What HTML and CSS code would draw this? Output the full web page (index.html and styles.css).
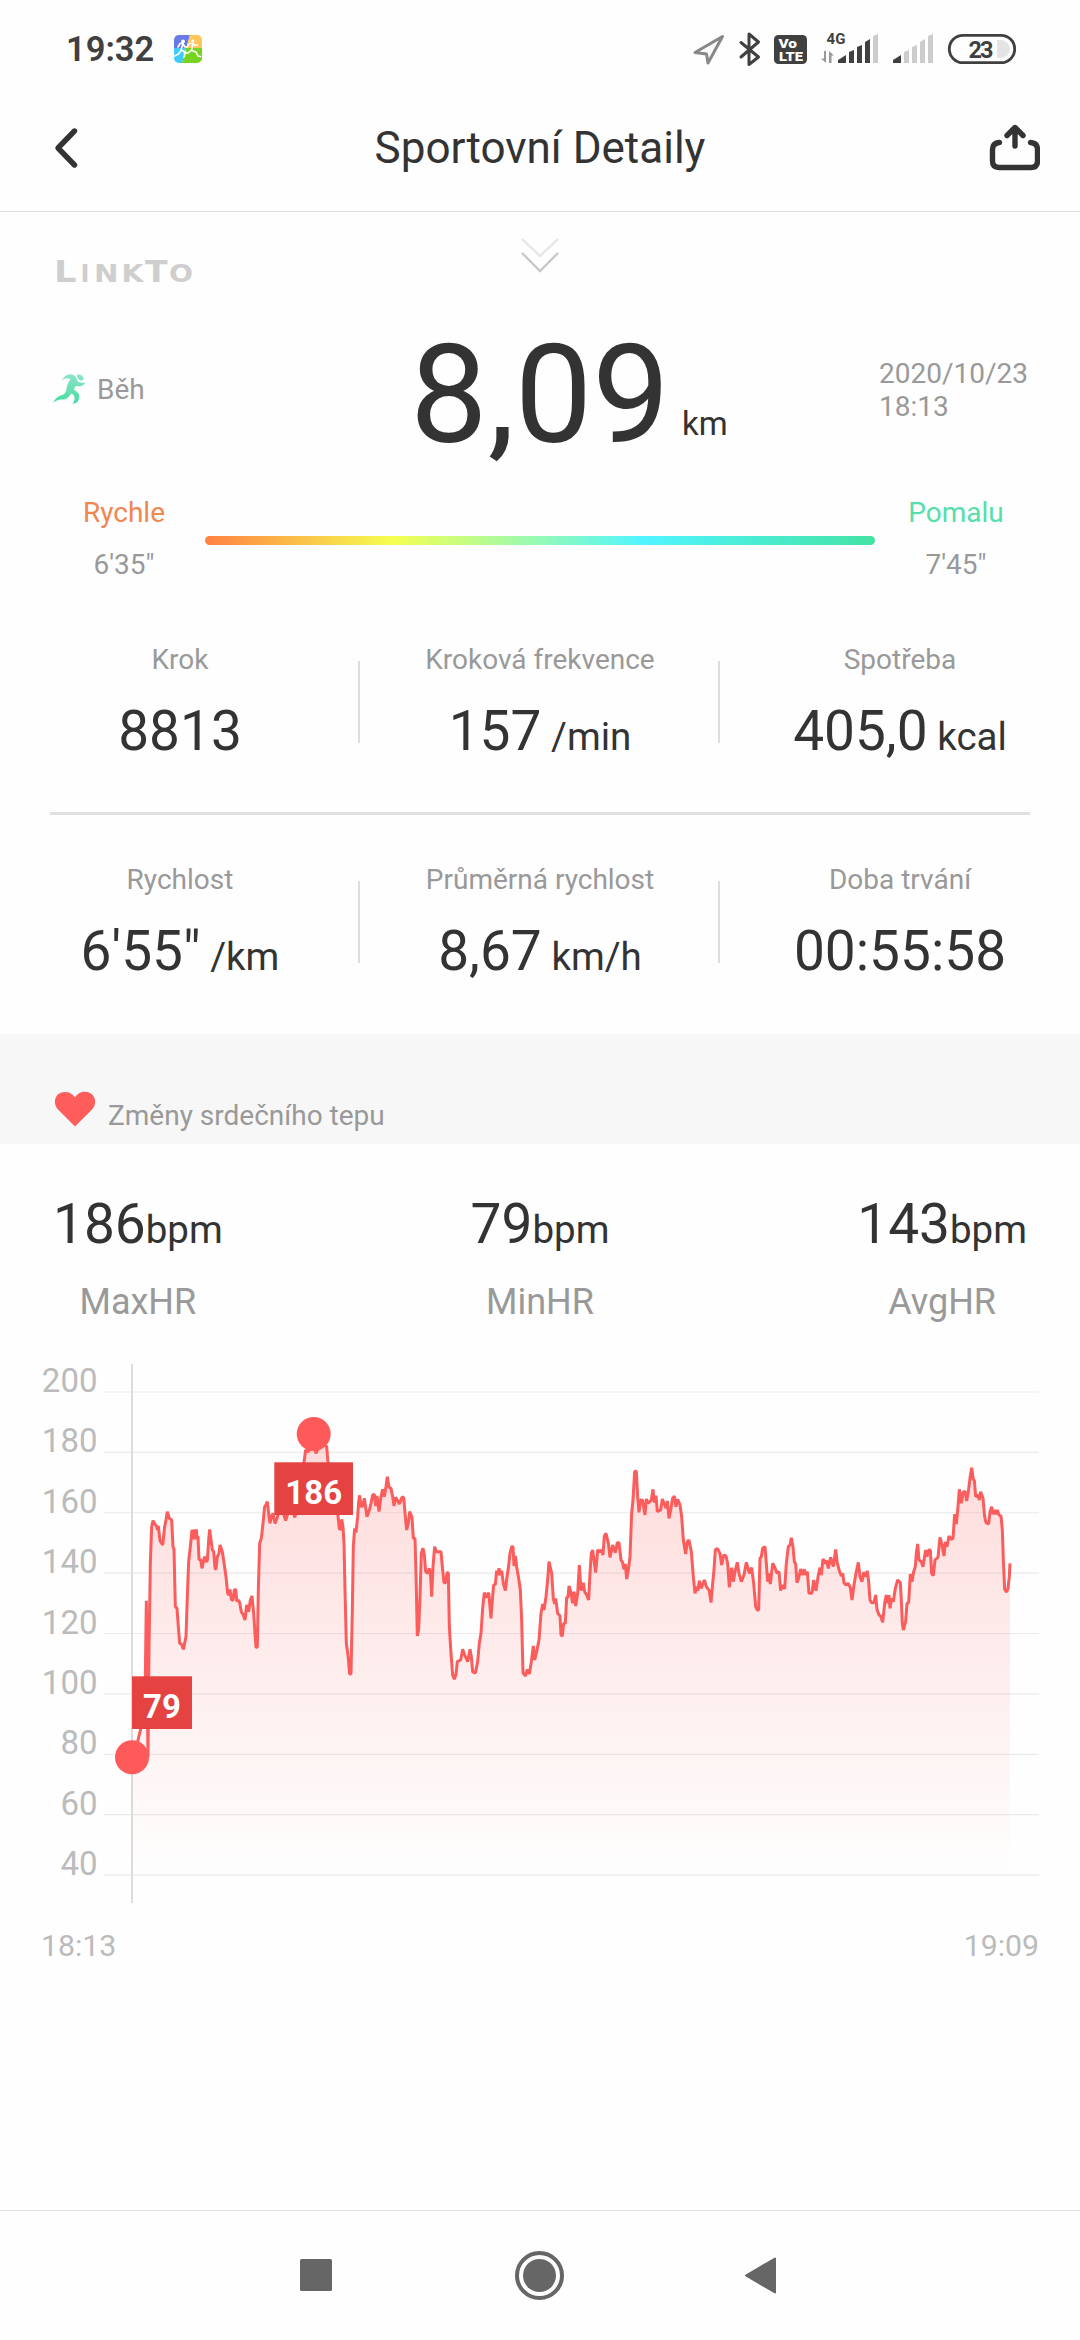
FILE: index.html
```html
<!DOCTYPE html>
<html lang="cs">
<head>
    <meta charset="UTF-8">
    <meta name="viewport" content="width=device-width, initial-scale=1.0">
    <title>Sportovní Detaily</title>
    <link rel="stylesheet" href="styles.css">
</head>
<body>
    <div class="status-bar">
        <span class="clock">19:32</span>
        <svg class="app-icon" width="28" height="28" viewBox="0 0 28 28">
            <defs><clipPath id="app-clip"><rect width="28" height="28" rx="5"/></clipPath></defs>
            <g clip-path="url(#app-clip)">
                <path fill="#667be8" d="M0 0h16l-4 14H0z"/>
                <path fill="#ffc65c" d="M16 0h12v14H12z"/>
                <path fill="#3fcbff" d="M0 13h12L8 28H0z"/>
                <path fill="#76d321" d="M12 13h16v15H8z"/>
            </g>
            <g fill="none" stroke="#fff" stroke-width="1.6" stroke-linecap="round" stroke-linejoin="round">
                <path d="M4 12l2-3.500h3l-2 6.500 4.500 2-1.500 5M7 15.500l-2.500 3.500-4 2M9 9l2 3h2"/>
                <path d="M13.500 11l2-2.500h3.500l-1.500 7 4.500 1.500 2 4 2.500.5M17 15.500l-3 2.500-4 0M19 8.500l2 2 2.500-.5"/>
            </g>
            <circle cx="9" cy="6.500" r="1.900" fill="#fff"/>
            <circle cx="18.800" cy="6" r="1.600" fill="#fff"/>
        </svg>
        <svg class="status-icons" width="328" height="44" viewBox="690 27 328 44">
            <path d="M722.500 36.500L695 52.500l11.500 1.500 1.500 9z" fill="none" stroke="#888" stroke-width="3" stroke-linejoin="round"/>
            <path d="M741 42.500l17.500 14.500-9.500 7.500V34l9.500 8L741 57" fill="none" stroke="#404040" stroke-width="3" stroke-linejoin="round" stroke-linecap="round"/>
            <rect x="774" y="35" width="33" height="29" rx="4.500" fill="#404040"/>
            <text class="volte" x="778.500" y="47.500" textLength="18.500" lengthAdjust="spacingAndGlyphs">Vo</text>
            <text class="volte" x="779" y="60.800" textLength="24" lengthAdjust="spacingAndGlyphs">LTE</text>
            <text class="net" x="826.500" y="44" textLength="19">4G</text>
            <path d="M826 51v12l-5-4.500h3V51zM829 63V51l5 4.500h-2.500V63z" fill="#999"/>
            <path d="M838 63v-3l8-5v8zM849 63V52l5-2v13zM857 63V47l5-2v18zM865 63V42l5-3v24z" fill="#404040"/>
            <path d="M873 63V36l5-2v29z" fill="#ccc"/>
            <path d="M893 63v-3l8-5v8z" fill="#404040"/>
            <path d="M904 63V52l5-2v13zM912 63V47l5-2v18zM920 63V42l5-3v24zM928 63V36l5-2v29z" fill="#ccc"/>
            <rect x="949.300" y="35.300" width="65.400" height="27.400" rx="13.700" fill="none" stroke="#404040" stroke-width="2.800"/>
            <path d="M997 40h4a9 9 0 0 1 0 18h-4z" fill="#e4e4e4"/>
            <text class="battery" x="968.500" y="57.500" textLength="25">23</text>
        </svg>
    </div>

    <header class="header">
        <svg width="26" height="42" viewBox="0 0 26 42">
            <path d="M21.500 4L5 21l16.500 17" fill="none" stroke="#333" stroke-width="5.400" stroke-linecap="round" stroke-linejoin="round"/>
        </svg>
        <h1>Sportovní Detaily</h1>
        <svg width="52" height="50" viewBox="987 120 52 50">
            <g fill="none" stroke="#333" stroke-width="5.400" stroke-linecap="round" stroke-linejoin="round">
                <path d="M998.500 139.500q-7 .5-7 7v11.500q0 6.500 6.500 6.500h32q6.500 0 6.500-6.500v-11.500q0-6.500-7-7"/>
                <path d="M1014 143v-18M1006 132.500l8-8 8 8"/>
            </g>
        </svg>
    </header>

    <section class="summary">
        <div class="brand-row">
            <svg width="140" height="44" viewBox="54 250 140 44">
                <g class="brand">
                    <text class="brand-big" x="54" y="281.500" textLength="22.500" lengthAdjust="spacingAndGlyphs">L</text>
                    <text x="80.500" y="281.500">I</text>
                    <text x="94" y="281.500" textLength="24.500" lengthAdjust="spacingAndGlyphs">N</text>
                    <text x="121.500" y="281.500" textLength="22" lengthAdjust="spacingAndGlyphs">K</text>
                    <text class="brand-big" x="145" y="281.500" textLength="22.500" lengthAdjust="spacingAndGlyphs">T</text>
                    <text x="169" y="281.500" textLength="24" lengthAdjust="spacingAndGlyphs">O</text>
                </g>
            </svg>
            <svg width="38" height="38" viewBox="0 0 38 38">
                <path d="M1 2l18 17L37 2" fill="none" stroke="#e6e6e6" stroke-width="2.400"/>
                <path d="M1 16l18 18 18-18" fill="none" stroke="#c8c8c8" stroke-width="2.400"/>
            </svg>
        </div>

        <div class="distance-row">
            <div class="sport">
                <svg width="34" height="32" viewBox="0 0 34 32">
                    <defs>
                        <linearGradient id="run" x1="0" y1="0" x2="0" y2="1">
                            <stop offset="0" stop-color="#8ee5c8"/>
                            <stop offset="1" stop-color="#45dca0"/>
                        </linearGradient>
                    </defs>
                    <path fill="url(#run)" d="M8.500 7.500C11 3 15 .5 19 1.500c3 .8 5 3 5 6 1 2 5 2.500 8.500 2-2 3.500-6 4.500-9.500 3.500-1.500 1.500-2 3-2 4 4 2 6 4 5 8.500-.5 3-2.500 5-6.500 5 3-3 2.500-7 .5-9l-2-1c-2 3.500-4.500 6-8 6-3.500 0-6 .5-10 3 2.500-4.500 6-7 9-7.500 3-.5 4-3.500 4.500-6 .5-4 2-7.500 4-10-3.500-1.500-6-.5-9 1.500zM24 1.500c4-.5 6.500 1.500 6.500 4.500-.5 2-2.500 1.500-4.500.5C24.500 5.500 24 4 24 1.500z"/>
                </svg>
                <span>Běh</span>
            </div>
            <div class="distance"><span class="distance-value">8,09</span><span class="distance-unit">km</span></div>
            <div class="date">2020/10/23<br>18:13</div>
        </div>

        <div class="pace-row">
            <div class="pace"><span class="fast">Rychle</span><span>6'35"</span></div>
            <div class="pace-bar"></div>
            <div class="pace"><span class="slow">Pomalu</span><span>7'45"</span></div>
        </div>

        <div class="stats">
            <div class="stat"><div class="label">Krok</div><div class="value">8813</div></div>
            <div class="stat"><div class="label">Kroková frekvence</div><div class="value">157 <small>/min</small></div></div>
            <div class="stat"><div class="label">Spotřeba</div><div class="value">405,0 <small>kcal</small></div></div>
        </div>
        <hr>
        <div class="stats">
            <div class="stat"><div class="label">Rychlost</div><div class="value">6'55" <small>/km</small></div></div>
            <div class="stat"><div class="label">Průměrná rychlost</div><div class="value">8,67 <small>km/h</small></div></div>
            <div class="stat"><div class="label">Doba trvání</div><div class="value">00:55:58</div></div>
        </div>
    </section>

    <div class="section-title">
        <svg width="42" height="36" viewBox="0 0 42 36">
            <path fill="#ff5c5c" d="M21 35.500L4 18.500C-.5 13.500 0 6.500 4.500 3 9.500-.5 17 .5 21 6.500 25-.5 33-.5 37.500 3c4.500 3.500 5 10.500.5 15.500z"/>
        </svg>
        <span>Změny srdečního tepu</span>
    </div>

    <section class="heart-rate">
        <div class="hr-item"><div class="value">186<small>bpm</small></div><div class="hr-label">MaxHR</div></div>
        <div class="hr-item"><div class="value">79<small>bpm</small></div><div class="hr-label">MinHR</div></div>
        <div class="hr-item"><div class="value">143<small>bpm</small></div><div class="hr-label">AvgHR</div></div>
    </section>

    <svg class="chart" id="chart" width="1080" height="620" viewBox="0 0 1080 620">
        <defs>
            <linearGradient id="area" gradientUnits="userSpaceOnUse" x1="0" y1="250" x2="0" y2="1575">
                <stop offset="0" stop-color="#ff5a5a" stop-opacity=".22"/>
                <stop offset="1" stop-color="#ff5a5a" stop-opacity="0"/>
            </linearGradient>
        </defs>
        <g id="grid"></g>
        <path class="axis" d="M132 14v539"/>
        <g transform="translate(30) scale(.33333)">
            <path id="hr-area" fill="url(#area)"/>
            <path id="hr-line" class="hr-line"/>
        </g>
        <circle class="dot" cx="132" cy="407.300" r="17"/>
        <circle class="dot" cx="313.700" cy="84" r="17"/>
        <rect class="tag" x="132" y="326.300" width="60" height="52.700"/>
        <text class="tag-text" x="162" y="368">79</text>
        <rect class="tag" x="274.300" y="112.300" width="78.700" height="52.700"/>
        <text class="tag-text" x="313.700" y="153.700">186</text>
        <text class="time" x="41" y="605.500">18:13</text>
        <text class="time time-end" x="1039" y="605.500">19:09</text>
    </svg>

    <nav class="nav-bar">
        <svg width="1080" height="129" viewBox="0 2211 1080 129" fill="#666">
            <rect x="300" y="2259" width="32" height="32" rx="1.500"/>
            <circle cx="539.500" cy="2275.500" r="22.500" fill="none" stroke="#666" stroke-width="4"/>
            <circle cx="539.500" cy="2275.500" r="16.500"/>
            <path d="M746 2275.500l29-17v34z" stroke="#666" stroke-width="2" stroke-linejoin="round"/>
        </svg>
    </nav>

    <script>
        // Body křivky tepu (x, y) ve třetinách pixelu
        const points = `
            305,1220 323,1175 332,1137 346,980 349,752 351,980 354,1220 357,900 361,640 365,530 369,512 374,522 380,528 382,540
            385,528 390,572 398,585 404,530 408,510 412,485 418,505 425,510 429,590 432,598 436,770 441,775 445,830 449,880 454,882
            460,898 468,860 472,740 476,635 481,590 486,540 489,568 492,538 496,568 499,538 501,560 504,560 507,628 512,630 516,655
            521,630 524,620 527,635 532,632 536,570 539,538 543,570 547,600 551,605 555,655 558,658 562,620 567,610 570,585 577,605
            583,645 588,680 593,730 597,735 600,718 604,748 609,752 613,720 617,718 621,755 625,750 629,758 634,785 640,795 645,810
            650,765 656,785 661,750 666,738 671,790 675,850 678,892 682,892 685,720 689,580 694,565 699,520 704,470 708,465 712,455
            717,500 720,520 724,500 729,490 735,520 741,505 750,470 760,490 767,512 775,485 785,480 795,502 805,430 815,380 822,337
            827,300 835,305 845,290 853,295 858,310 864,297 880,280 890,290 894,337 910,420 922,480 928,535 931,540 935,508 939,530
            942,580 945,720 949,880 954,915 959,972 963,972 967,780 970,590 974,535 978,548 983,500 986,455 989,436 993,470 998,468
            1003,445 1006,465 1011,500 1018,480 1023,460 1028,435 1033,433 1037,468 1041,438 1047,485 1053,440 1058,418 1063,440
            1068,410 1072,380 1077,412 1083,415 1088,440 1092,468 1097,442 1108,462 1116,442 1121,442 1126,500 1130,540 1135,520
            1139,485 1146,502 1150,565 1155,565 1158,670 1162,858 1166,840 1170,740 1174,610 1179,595 1183,615 1187,665 1193,670
            1198,655 1202,680 1205,740 1209,650 1214,590 1219,605 1233,605 1237,650 1242,698 1247,698 1251,668 1255,668 1258,830
            1263,910 1268,975 1273,988 1278,972 1282,935 1292,930 1298,898 1304,915 1313,935 1320,898 1324,920 1328,965 1336,970
            1343,935 1348,880 1353,850 1358,775 1363,728 1369,743 1376,728 1380,770 1383,805 1387,750 1391,705 1396,703 1400,662
            1404,675 1407,655 1411,675 1415,662 1420,700 1426,722 1431,680 1435,655 1440,610 1445,590 1449,590 1452,648 1456,618
            1460,650 1466,685 1471,720 1475,810 1479,968 1486,978 1492,958 1498,972 1504,935 1510,888 1514,930 1520,905 1527,870
            1533,790 1538,762 1542,780 1548,740 1553,690 1557,635 1565,670 1570,745 1574,762 1577,745 1583,790 1590,798 1593,855
            1597,858 1601,820 1606,820 1610,742 1614,742 1617,708 1623,728 1628,760 1632,725 1637,768 1643,730 1648,645 1653,722
            1660,698 1664,725 1670,735 1676,750 1680,670 1684,610 1688,600 1692,630 1697,668 1703,600 1710,605 1715,600 1719,615
            1723,558 1728,550 1735,580 1740,622 1748,585 1756,608 1762,578 1767,578 1773,630 1778,638 1782,658 1786,642 1790,687
            1795,660 1800,620 1805,490 1809,450 1814,365 1819,363 1823,440 1827,487 1832,450 1837,450 1841,470 1845,495 1849,447
            1854,460 1864,450 1869,418 1873,458 1878,437 1882,485 1892,480 1897,447 1903,462 1908,475 1912,453 1917,505 1923,475
            1928,445 1933,438 1938,470 1943,448 1950,465 1955,500 1960,570 1967,612 1972,575 1977,570 1984,605 1990,680 1995,730
            2000,710 2004,722 2008,692 2014,715 2023,690 2029,710 2038,722 2043,758 2048,700 2052,660 2056,600 2062,595 2070,610
            2075,645 2081,615 2088,618 2093,640 2098,712 2105,653 2110,695 2116,660 2122,637 2127,670 2134,695 2142,675 2149,637
            2158,670 2165,653 2171,700 2177,770 2182,780 2186,780 2190,625 2194,620 2198,595 2205,590 2209,640 2213,695 2217,670
            2221,702 2228,640 2235,653 2241,670 2247,665 2252,722 2257,705 2264,717 2269,640 2275,590 2280,585 2284,563 2289,590
            2293,635 2297,642 2301,698 2307,680 2312,657 2317,675 2323,658 2327,675 2332,665 2337,730 2346,730 2351,690 2358,722
            2365,675 2370,653 2374,675 2379,627 2385,640 2390,632 2395,655 2402,622 2410,650 2417,598 2422,640 2428,662 2434,678
            2438,670 2442,698 2448,705 2454,700 2461,712 2466,750 2472,705 2478,670 2485,637 2490,680 2496,695 2501,667 2507,680
            2512,663 2516,695 2520,750 2525,758 2532,758 2537,735 2541,778 2547,795 2552,798 2558,817 2564,760 2569,735 2573,760
            2577,735 2580,775 2585,745 2590,755 2596,715 2603,690 2611,698 2614,750 2617,820 2620,840 2627,815 2631,760 2636,758
            2641,672 2646,695 2651,665 2656,650 2659,610 2663,582 2667,630 2674,635 2679,650 2687,600 2691,620 2696,600 2701,600
            2705,670 2710,677 2715,630 2724,622 2730,562 2736,585 2742,618 2746,575 2751,590 2757,558 2763,568 2769,565 2774,492
            2779,522 2784,470 2788,418 2794,460 2800,425 2806,425 2810,453 2815,425 2820,385 2825,353 2830,390 2833,390 2837,440
            2844,435 2848,450 2852,425 2859,445 2864,500 2868,518 2876,522 2880,485 2885,470 2889,493 2893,480 2898,493 2902,480
            2907,495 2913,498 2917,540 2920,630 2924,718 2930,726 2934,715 2938,680 2940,640`.trim().split(/\s+/);

        document.getElementById('hr-line').setAttribute('d', 'M' + points.join('L'));
        document.getElementById('hr-area').setAttribute('d', 'M306,1575L' + points.join('L') + 'V1575Z');

        // Vodorovné čáry a popisky osy
        let grid = '';
        for (let v = 200; v >= 40; v -= 20) {
            const y = 42 + (200 - v) * 3.019;
            grid += `<path class="grid-line" d="M104 ${y}H1039"/>
                <text class="axis-label" x="97.500" y="${y}">${v}</text>`;
        }
        document.getElementById('grid').innerHTML = grid;
    </script>
</body>
</html>
```

FILE: styles.css
```css
* {
    box-sizing: border-box;
}
body {
    margin: 0;
    width: 1080px;
    height: 2340px;
    display: flex;
    flex-direction: column;
    font-family: Roboto, "Noto Sans", sans-serif;
    font-size: 28px;
    color: #333;
    background-color: #fefefe;
}
svg {
    display: block;
    flex-shrink: 0;
}

/* Stavový řádek */
.status-bar {
    height: 85px;
    padding: 13px 62px 0 66px;
    display: flex;
    align-items: center;
}
.clock {
    font-size: 34.5px;
    font-weight: 600;
    color: #404040;
    width: 108px;
}
.status-icons {
    margin-left: auto;
}
.volte {
    font-size: 13px;
    font-weight: 900;
    fill: #fff;
}
.net {
    font-size: 15px;
    font-weight: 700;
    fill: #404040;
}
.battery {
    font-size: 23.5px;
    font-weight: 700;
    fill: #404040;
}

/* Hlavička */
.header {
    height: 127px;
    padding: 0 40px 0 53px;
    display: grid;
    grid-template-columns: 52px 1fr 52px;
    align-items: center;
    border-bottom: 1px solid #e0e0e0;
}
.header h1 {
    margin: 0;
    padding-right: 13px;
    font-size: 44px;
    font-weight: 400;
    text-align: center;
}

/* Souhrn */
.summary {
    height: 822px;
}
.brand-row {
    height: 100px;
    padding: 25px 54px 0;
    display: grid;
    grid-template-columns: 1fr auto 1fr;
}
.brand-row svg:first-child {
    margin-top: 13px;
}
.brand {
    font-family: "DejaVu Sans", sans-serif;
    font-size: 24px;
    font-weight: 700;
    fill: #cecece;
}
.brand-big {
    font-size: 29.5px;
}
.distance-row {
    height: 160px;
    padding: 0 53px;
    display: grid;
    grid-template-columns: 1fr auto 1fr;
    color: #999;
}
.sport {
    display: flex;
    align-items: flex-start;
    gap: 10px;
    line-height: 32px;
    padding-top: 61px;
}
.sport span {
    padding-top: 1px;
}
.distance {
    color: #333;
    padding-left: 66px;
    line-height: 160px;
    white-space: nowrap;
    position: relative;
    top: 3px;
}
.distance-value {
    font-size: 138px;
}
.distance-unit {
    display: inline-block;
    width: 66px;
    padding-left: 12px;
    font-size: 33px;
    line-height: 1;
    position: relative;
    top: -7px;
}
.date {
    justify-self: end;
    margin-right: -1px;
    line-height: 33px;
    padding-top: 45px;
}
.pace-row {
    height: 104px;
    margin: 15px 43px 0;
    display: grid;
    grid-template-columns: 162px 1fr 162px;
    align-items: center;
}
.pace {
    display: flex;
    flex-direction: column;
    text-align: center;
    line-height: 52px;
    color: #999;
}
.pace .fast {
    color: #f08650;
}
.pace .slow {
    color: #55dfab;
}
.pace-bar {
    height: 9px;
    margin-top: 3px;
    border-radius: 5px;
    background: linear-gradient(90deg, #ff8142, #f5ff50 28%, #50f5ff 65.5%, #45e2a4);
}
.stats {
    height: 121px;
    margin-top: 51px;
    display: grid;
    grid-template-columns: repeat(3, 1fr);
    text-align: center;
}
/* svislý oddělovač je blíž u pravého okraje sloupce */
.stat {
    background: linear-gradient(#dedede, #dedede) no-repeat right 19px / 2px 82px;
}
.stat:last-child {
    background: none;
}
.label {
    line-height: 36px;
    margin-bottom: 21px;
    color: #999;
}
.value {
    font-size: 55px;
    line-height: 64px;
    white-space: nowrap;
}
.value small {
    font-size: 38.5px;
    line-height: 1;
}
.stat small {
    margin-left: -4px;
}
hr {
    height: 3px;
    margin: 49px 50px 0;
    border: none;
    background-color: #e0e0e0;
}
hr + .stats {
    margin-top: 47px;
}

/* Tep */
.section-title {
    height: 110px;
    padding: 57px 54px 0;
    display: flex;
    align-items: flex-start;
    gap: 12px;
    line-height: 36px;
    color: #999;
    background-color: #f7f7f7;
}
.section-title span {
    padding-top: 7px;
}
.heart-rate {
    height: 206px;
    padding: 48px 53px 0;
    display: flex;
    justify-content: space-between;
    text-align: center;
}
.hr-label {
    margin-top: 24px;
    font-size: 36px;
    line-height: 44px;
    color: #999;
}
.chart {
    font-size: 33px;
}
.grid-line {
    stroke: #000;
    stroke-opacity: .08;
    stroke-width: 1.2;
}
.axis {
    stroke: #dcdcdc;
    stroke-width: 2;
}
.axis-label {
    fill: #bbb;
    text-anchor: end;
}
.hr-line {
    fill: none;
    stroke: #fb5c5c;
    stroke-width: 9;
    stroke-linejoin: bevel;
}
.dot {
    fill: #ff5a5a;
}
.tag {
    fill: #e54341;
}
.tag-text {
    fill: #fff;
    font-weight: 700;
    text-anchor: middle;
}
.time {
    font-size: 30.25px;
    fill: #bbb;
}
.time-end {
    text-anchor: end;
}

/* Navigace */
.nav-bar {
    height: 130px;
    margin-top: auto;
    border-top: 1px solid #e0e0e0;
}
```
